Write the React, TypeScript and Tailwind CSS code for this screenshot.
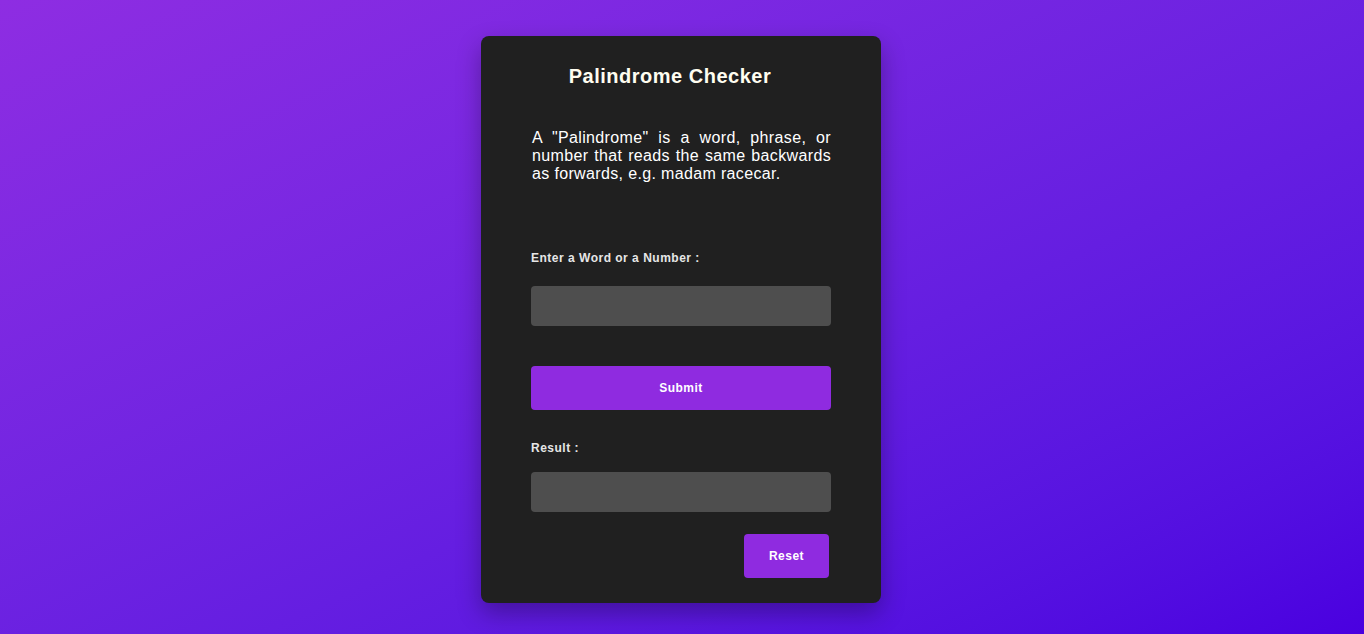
import React, { useState } from 'react';

const App: React.FC = () => {
  const [value, setValue] = useState('');
  const [result, setResult] = useState('');

  const handleSubmit = () => {
    const clean = value.toLowerCase().replace(/[^a-z0-9]/g, '');
    if (!clean) {
      setResult('');
      return;
    }
    const rev = clean.split('').reverse().join('');
    setResult(clean === rev ? `${value} is a Palindrome` : `${value} is not a Palindrome`);
  };

  const handleReset = () => {
    setValue('');
    setResult('');
  };

  return (
    <div className="min-h-screen w-full bg-gradient-to-br from-[#8e2de2] to-[#4a00e0] flex justify-center pt-[36px] pr-[2px] font-['Liberation_Sans',Arial,sans-serif] tracking-[0.5px]">
      <div className="w-[400px] h-[567px] bg-[#202020] rounded-lg shadow-[0_10px_25px_rgba(0,0,0,0.3)] px-[50px] pt-[29px]">
        <h1 className="text-center pr-[22px] text-[20px] leading-[23px] font-bold text-[#fffdf0]">Palindrome Checker</h1>

        <p className="mt-[41px] text-[16px] leading-[18px] text-white text-justify pl-[1px] tracking-[0.35px]">
          A "Palindrome" is a word, phrase, or number that reads the same backwards as forwards, e.g. madam racecar.
        </p>

        <label className="block mt-[68px] text-[12px] leading-[14px] font-bold text-[#e6e6e6]">Enter a Word or a Number :</label>
        <input
          value={value}
          onChange={e => setValue(e.target.value)}
          className="block mt-[21px] w-full h-[40px] rounded bg-[#4e4e4e] text-white text-[14px] px-3 outline-none"
        />

        <button
          onClick={handleSubmit}
          className="block mt-[40px] w-full h-[44px] rounded bg-[#8f2be0] text-white text-[12px] font-bold"
        >
          Submit
        </button>

        <label className="block mt-[31px] text-[12px] leading-[14px] font-bold text-[#e6e6e6]">Result :</label>
        <div className="mt-[17px] w-full h-[40px] rounded bg-[#4e4e4e] text-white text-[14px] px-3 flex items-center">{result}</div>

        <div className="flex justify-end mt-[22px] pr-[2px]">
          <button
            onClick={handleReset}
            className="w-[85px] h-[44px] rounded bg-[#8f2be0] text-white text-[12px] font-bold"
          >
            Reset
          </button>
        </div>
      </div>
    </div>
  );
};

export default App;
